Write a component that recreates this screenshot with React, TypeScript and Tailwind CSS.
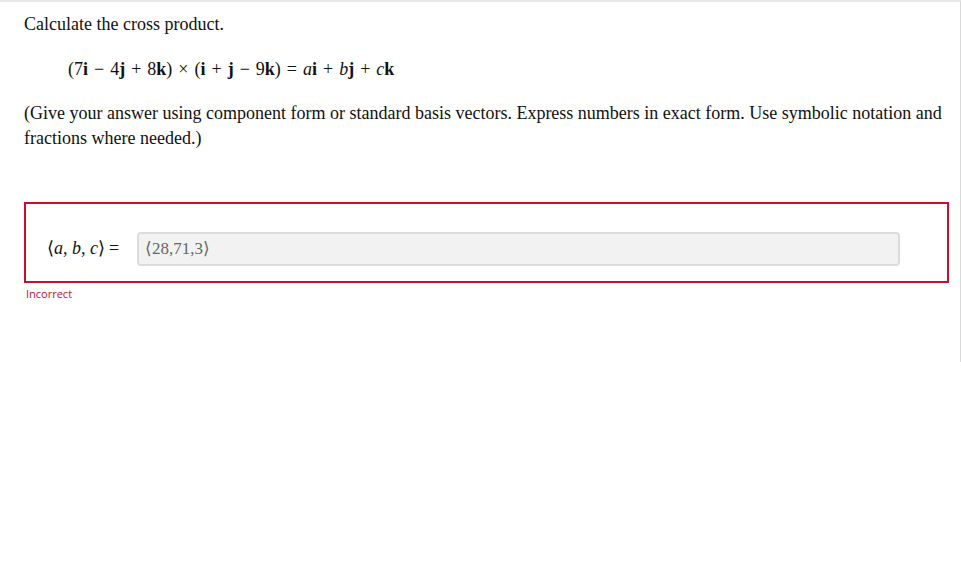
import React from 'react';

const serif = { fontFamily: '"Liberation Serif", "Times New Roman", serif' };

// binary operator with MathJax-like spacing
const Op = ({ children }: { children: React.ReactNode }) => (
  <span className="mx-[6px]">{children}</span>
);

export default function App() {
  return (
    <div className="min-h-screen bg-white">
      <div
        className="w-[961px] h-[362px] border-t-2 border-r border-[#e8e8e8] border-r-[#d9d9d9] pl-6 pr-[8px] pt-[12px] text-[#111]"
        style={serif}
      >
        <p className="text-[18px] leading-5">Calculate the cross product.</p>

        {/* equation */}
        <div className="mt-[23px] pl-11 text-[18px] leading-6">
          (7<b>i</b><Op>−</Op>4<b>j</b><Op>+</Op>8<b>k</b>)<Op>×</Op>(<b>i</b><Op>+</Op><b>j</b><Op>−</Op>9<b>k</b>)<Op>=</Op><i>a</i><b>i</b><Op>+</Op><i>b</i><b>j</b><Op>+</Op><i>c</i><b>k</b>
        </div>

        <p className="mt-[20px] text-[18px] leading-[25px]">
          (Give your answer using component form or standard basis vectors. Express numbers in exact form. Use symbolic notation and fractions where needed.)
        </p>

        {/* answer box */}
        <div className="mt-[51px] mr-[3px] border-2 border-[#c8102e] h-[81px] flex items-center pl-[21px] pr-[47px] pt-[12px]">
          <span className="text-[18px] w-[90px] shrink-0">
            ⟨<i>a</i>,&nbsp;<i>b</i>,&nbsp;<i>c</i>⟩<span className="ml-[4px]">=</span>
          </span>
          <div className="flex-1 h-[34px] rounded-[4px] border-2 border-[#dcdcdc] bg-[#f2f2f2] flex items-center px-[6px] text-[17px] text-[#666]">
            ⟨28,71,3⟩
          </div>
        </div>
        <div
          className="mt-[3px] pl-[2px] text-[11px] text-[#c8102e]"
          style={{ fontFamily: '"Open Sans", "Noto Sans", sans-serif' }}
        >
          Incorrect
        </div>
      </div>
    </div>
  );
}
